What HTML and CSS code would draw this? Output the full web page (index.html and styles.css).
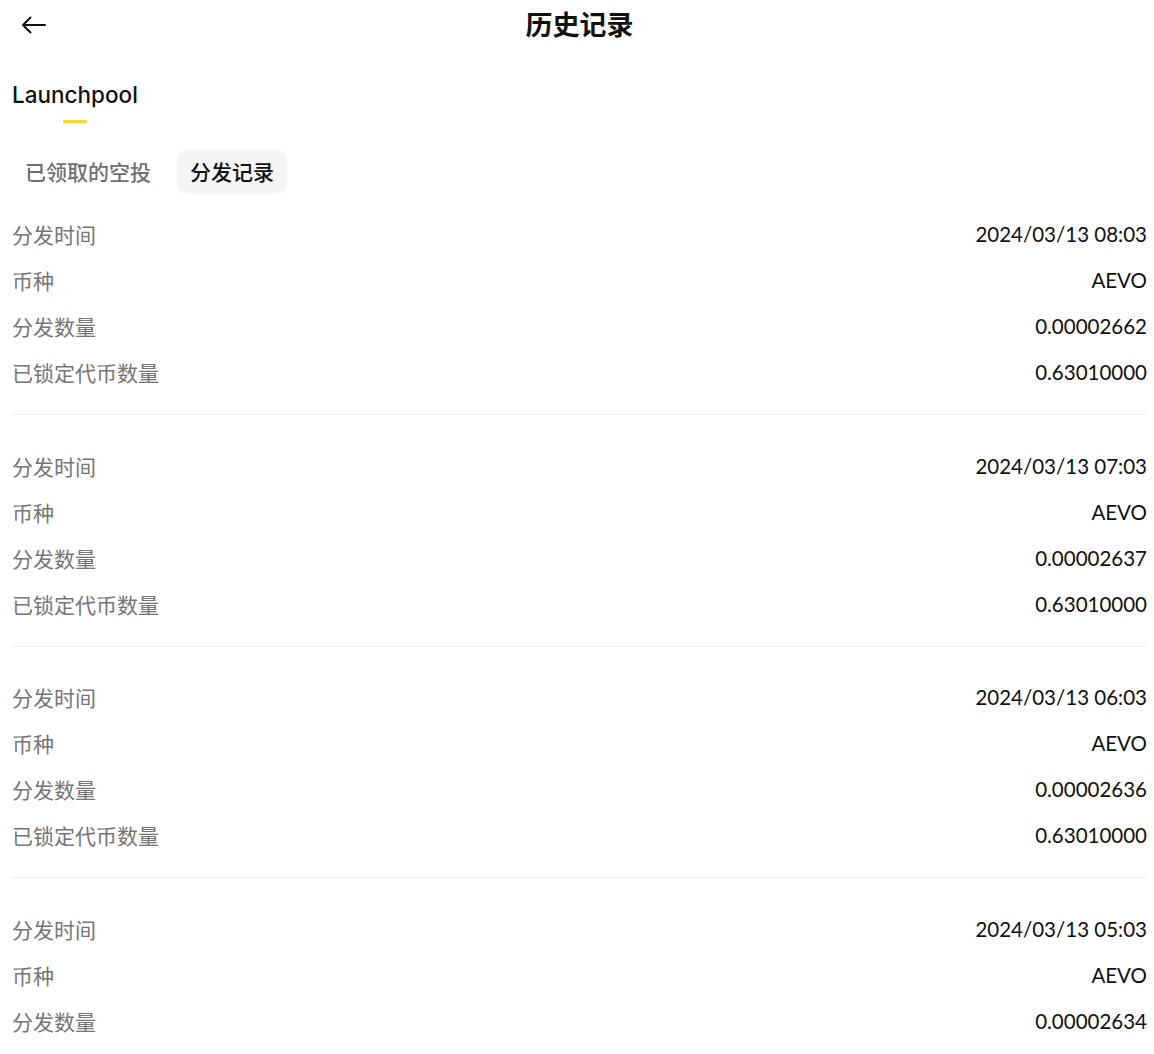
FILE: index.html
```html
<!DOCTYPE html>
<html lang="zh-CN">
<head>
<meta charset="utf-8">
<title>历史记录</title>
<link rel="stylesheet" href="styles.css">
</head>
<body>
<div class="page">
  <header class="topbar">
    <button class="back" aria-label="返回">
      <svg width="26" height="20" viewBox="0 0 26 20" fill="none" stroke="#111" stroke-width="2" stroke-linecap="round" stroke-linejoin="round">
        <path d="M24 10H2M9.5 2.5L2 10l7.5 7.5"/>
      </svg>
    </button>
    <h1 class="title">历史记录</h1>
  </header>

  <nav class="tabs">
    <div class="tab active">Launchpool<span class="indicator"></span></div>
  </nav>

  <div class="subtabs">
    <div class="subtab">已领取的空投</div>
    <div class="subtab selected">分发记录</div>
  </div>

  <div class="list">
    <section class="group">
      <div class="row"><span class="label">分发时间</span><span class="value">2024/03/13 08:03</span></div>
      <div class="row"><span class="label">币种</span><span class="value">AEVO</span></div>
      <div class="row"><span class="label">分发数量</span><span class="value">0.00002662</span></div>
      <div class="row"><span class="label">已锁定代币数量</span><span class="value">0.63010000</span></div>
    </section>
    <section class="group">
      <div class="row"><span class="label">分发时间</span><span class="value">2024/03/13 07:03</span></div>
      <div class="row"><span class="label">币种</span><span class="value">AEVO</span></div>
      <div class="row"><span class="label">分发数量</span><span class="value">0.00002637</span></div>
      <div class="row"><span class="label">已锁定代币数量</span><span class="value">0.63010000</span></div>
    </section>
    <section class="group">
      <div class="row"><span class="label">分发时间</span><span class="value">2024/03/13 06:03</span></div>
      <div class="row"><span class="label">币种</span><span class="value">AEVO</span></div>
      <div class="row"><span class="label">分发数量</span><span class="value">0.00002636</span></div>
      <div class="row"><span class="label">已锁定代币数量</span><span class="value">0.63010000</span></div>
    </section>
    <section class="group">
      <div class="row"><span class="label">分发时间</span><span class="value">2024/03/13 05:03</span></div>
      <div class="row"><span class="label">币种</span><span class="value">AEVO</span></div>
      <div class="row"><span class="label">分发数量</span><span class="value">0.00002634</span></div>
      <div class="row"><span class="label">已锁定代币数量</span><span class="value">0.63010000</span></div>
    </section>
  </div>
</div>
</body>
</html>
```

FILE: styles.css
```css
* { box-sizing: border-box; }
html, body { margin: 0; padding: 0; background: #fff; }
body {
  font-family: Lato, "Noto Sans CJK SC", sans-serif;
  color: #111;
  overflow: hidden;
}
.page {
  padding: 0 7px 0 12px;
}
.topbar {
  height: 52px;
  padding-bottom: 6px;
  display: flex;
  align-items: center;
  justify-content: center;
  position: relative;
}
.back {
  position: absolute;
  left: 9px;
  top: 15px;
  border: 0;
  background: none;
  padding: 0;
  width: 26px;
  height: 20px;
  display: flex;
}
.title {
  margin: 0;
  font-size: 27px;
  font-weight: 700;
  font-family: "Noto Sans CJK SC", sans-serif;
}
.tabs {
  display: flex;
  height: 97px;
  padding-top: 28px;
}
.tab {
  position: relative;
  font-family: Inter, "Noto Sans CJK SC", sans-serif;
  font-size: 22.5px;
  font-weight: 500;
  height: 30px;
  line-height: 30px;
}
.indicator {
  position: absolute;
  left: 50%;
  top: 40px;
  width: 24px;
  height: 3px;
  margin-left: -12px;
  background: #fcd535;
  border-radius: 1px;
}
.subtabs {
  display: flex;
  gap: 13px;
  height: 46px;
  margin-bottom: 16px;
}
.subtab {
  font-family: "Noto Sans CJK SC", sans-serif;
  font-size: 21px;
  font-weight: 500;
  color: #707070;
  padding: 0 13px;
  line-height: 45px;
  height: 45px;
  border-radius: 11px;
}
.subtab.selected {
  background: #f5f5f5;
  color: #111;
}
.group {
  border-bottom: 1px solid #eeeeee;
  padding-bottom: 19px;
  margin-bottom: 27.5px;
}
.row {
  height: 46px;
  display: flex;
  justify-content: space-between;
  align-items: center;
}
.label {
  font-family: "Noto Sans CJK SC", sans-serif;
  font-size: 21px;
  color: #757575;
}
.value {
  font-size: 20.5px;
  color: #111;
}
```
